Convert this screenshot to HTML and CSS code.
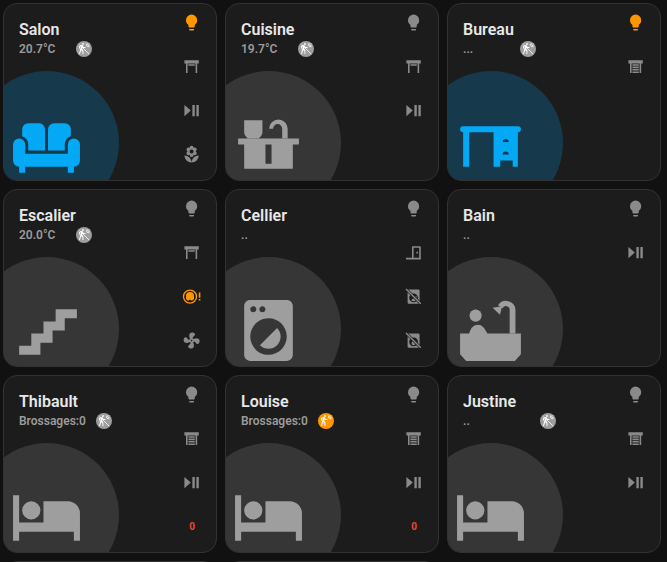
FILE: index.html
```html
<!DOCTYPE html>
<html lang="en">
<head>
    <meta charset="UTF-8">
    <meta name="viewport" content="width=device-width, initial-scale=1.0">
    <title>Maison</title>
    <link rel="stylesheet" href="styles.css">
</head>
<body>
    <!-- icons used by the room cards -->
    <svg class="defs" aria-hidden="true">
        <symbol id="bulb" viewBox="0 0 24 24"><path d="M12,2A7,7 0 0 0 5,9C5,11.38 6.19,13.47 8,14.74V17A1,1 0 0 0 9,18H15A1,1 0 0 0 16,17V14.74C17.81,13.47 19,11.38 19,9A7,7 0 0 0 12,2M9,21A1,1 0 0 0 10,22H14A1,1 0 0 0 15,21V20H9V21Z"/></symbol>
        <symbol id="shutter-open" viewBox="0 0 24 24"><path d="M3 4H21V8H19V20H17V8H7V20H5V8H3V4M8 9H16V11H8V9Z"/></symbol>
        <symbol id="shutter-closed" viewBox="0 0 24 24"><path d="M3 4H21V8H19V20H17V8H7V20H5V8H3V4M8 9H16V11H8V9M8 12H16V14H8V12M8 15H16V17H8V15M8 18H16V20H8V18Z"/></symbol>
        <symbol id="play-pause" viewBox="0 0 24 24"><path d="M3,5V19L11,12M13,19H16V5H13M18,5V19H21V5"/></symbol>
        <symbol id="flower" viewBox="0 0 24 24"><path d="M3,13A9,9 0 0,0 12,22C12,17 7.97,13 3,13M12,5.5A2.5,2.5 0 0,1 14.5,8A2.5,2.5 0 0,1 12,10.5A2.5,2.5 0 0,1 9.5,8A2.5,2.5 0 0,1 12,5.5M5.6,10.25A2.5,2.5 0 0,0 8.1,12.75C8.63,12.75 9.12,12.58 9.5,12.31C9.5,12.37 9.5,12.43 9.5,12.5A2.5,2.5 0 0,0 12,15A2.5,2.5 0 0,0 14.5,12.5C14.5,12.43 14.5,12.37 14.5,12.31C14.88,12.58 15.37,12.75 15.9,12.75C17.28,12.75 18.4,11.63 18.4,10.25C18.4,9.25 17.81,8.4 16.96,8C17.81,7.6 18.4,6.74 18.4,5.75C18.4,4.37 17.28,3.25 15.9,3.25C15.37,3.25 14.88,3.41 14.5,3.69C14.5,3.63 14.5,3.56 14.5,3.5A2.5,2.5 0 0,0 12,1A2.5,2.5 0 0,0 9.5,3.5C9.5,3.56 9.5,3.63 9.5,3.69C9.12,3.41 8.63,3.25 8.1,3.25A2.5,2.5 0 0,0 5.6,5.75C5.6,6.74 6.19,7.6 7.04,8C6.19,8.4 5.6,9.25 5.6,10.25M12,22A9,9 0 0,0 21,13C16,13 12,17 12,22Z"/></symbol>
        <symbol id="fan" viewBox="0 0 24 24"><path d="M12,11A1,1 0 0,0 11,12A1,1 0 0,0 12,13A1,1 0 0,0 13,12A1,1 0 0,0 12,11M12.5,2C17,2 17.11,5.57 14.75,6.75C13.76,7.24 13.32,8.29 13.13,9.22C13.61,9.42 14.03,9.73 14.35,10.13C18.05,8.13 22.03,8.92 22.03,12.5C22.03,17 18.46,17.1 17.28,14.73C16.78,13.74 15.72,13.3 14.79,13.11C14.59,13.59 14.28,14 13.88,14.34C15.87,18.03 15.08,22 11.5,22C7,22 6.91,18.42 9.27,17.24C10.25,16.75 10.69,15.71 10.89,14.79C10.4,14.59 9.97,14.27 9.65,13.87C5.96,15.85 2,15.07 2,11.5C2,7 5.56,6.89 6.74,9.26C7.24,10.25 8.29,10.68 9.22,10.87C9.41,10.39 9.73,9.97 10.14,9.65C8.15,5.96 8.94,2 12.5,2Z"/></symbol>
        <symbol id="door" viewBox="0 0 24 24"><path fill-rule="evenodd" d="M2.5 18.5H10V5A1 1 0 0 1 11 4H20A1 1 0 0 1 21 5V20.5H2.5ZM12 6V18.5H19V6ZM15.5 11H17.5V13H15.5Z"/></symbol>
        <symbol id="vacuum-alert" viewBox="0 0 24 24"><path fill-rule="evenodd" d="M10 3A9 9 0 1 0 10 21A9 9 0 1 0 10 3ZM10 4.7A7.3 7.3 0 1 1 10 19.3A7.3 7.3 0 1 1 10 4.7Z"/><path d="M10 6.300A5 5 0 0 0 5 11.300V15L7 17H8.500L9.500 16H10.500L11.500 17H13L15 15V11.300A5 5 0 0 0 10 6.300Z"/><path d="M21 7H23V13.500H21ZM21 15H23V17H21Z"/></symbol>
        <symbol id="washer-off" viewBox="0 0 24 24"><path fill-rule="evenodd" d="M6 3H18A1.5 1.5 0 0 1 19.5 4.500V19.500A1.500 1.500 0 0 1 18 21H6A1.500 1.500 0 0 1 4.500 19.500V4.500A1.500 1.500 0 0 1 6 3ZM12 8A5.500 5.500 0 1 0 12 19A5.500 5.500 0 1 0 12 8Z"/><path d="M15.500 11L15.800 15A4 4 0 0 1 9 16.500Z"/><path class="cut" d="M2.500 2.500L21 21"/><path class="slash" d="M2.500 2.500L21 21"/></symbol>
        <symbol id="dryer-off" viewBox="0 0 24 24"><path fill-rule="evenodd" d="M6 3H18A1.5 1.5 0 0 1 19.5 4.500V19.500A1.500 1.500 0 0 1 18 21H6A1.500 1.500 0 0 1 4.500 19.500V4.500A1.500 1.500 0 0 1 6 3ZM12 8A5.500 5.500 0 1 0 12 19A5.500 5.500 0 1 0 12 8Z"/><path d="M12 11C13.500 13 14.500 14 14.500 15.300A2.500 2.500 0 0 1 9.500 15.300C9.500 14 10.500 13 12 11Z"/><path class="cut" d="M2.500 2.500L21 21"/><path class="slash" d="M2.500 2.500L21 21"/></symbol>
        <symbol id="motion" viewBox="0 0 24 24"><path d="M10 0.2C9 .2 8.2 1 8.2 2C8.2 3 9 3.8 10 3.8C11 3.8 11.8 3 11.8 2C11.8 1 11 .2 10 .2M15.67 1A7.33 7.33 0 0 0 23 8.33V7A6 6 0 0 1 17 1H15.67M18.33 1C18.33 3.58 20.42 5.67 23 5.67V4.33C21.16 4.33 19.67 2.84 19.67 1H18.33M21 1A2 2 0 0 0 23 3V1H21M7.92 4.03C7.75 4.03 7.58 4.06 7.42 4.11L2 5.8V11H3.8V7.33L5.91 6.67L2 22H3.8L6.67 13.89L9 17V22H10.8V15.59L8.31 11.05L9.04 8.18L10.12 10H15V8.2H11.38L9.38 4.87C9.08 4.37 8.54 4.03 7.92 4.03Z"/></symbol>
        <symbol id="motion-off" viewBox="0 0 24 24"><path d="M10 0.2C9 .2 8.2 1 8.2 2C8.2 3 9 3.8 10 3.8C11 3.800 11.800 3 11.800 2C11.800 1 11 .2 10 .2M15.670 1A7.330 7.330 0 0 0 23 8.330V7A6 6 0 0 1 17 1H15.670M18.330 1C18.330 3.580 20.420 5.670 23 5.670V4.330C21.160 4.330 19.670 2.840 19.670 1H18.330M21 1A2 2 0 0 0 23 3V1H21M7.920 4.030C7.750 4.030 7.580 4.060 7.420 4.110L2 5.800V11H3.800V7.330L5.910 6.670L2 22H3.800L6.670 13.890L9 17V22H10.800V15.590L8.310 11.050L9.040 8.180L10.120 10H15V8.200H11.380L9.380 4.870C9.080 4.370 8.540 4.030 7.920 4.030Z"/><path class="slash-light" d="M3 3L22 22"/></symbol>
        <symbol id="bed" viewBox="0 0 24 24"><path d="M19 7H11V14H3V5H1V20H3V17H21V20H23V11A4 4 0 0 0 19 7M7 13A3 3 0 0 0 10 10A3 3 0 0 0 7 7A3 3 0 0 0 4 10A3 3 0 0 0 7 13Z"/></symbol>
        <symbol id="sofa" viewBox="0 0 24 24"><path d="M3 10A2 2 0 0 1 5 12V15H19V12A2 2 0 0 1 23 12V17.300A2 2 0 0 1 21 19.300V21.300H19V19.300H5V21.300H3V19.300A2 2 0 0 1 1 17.300V12A2 2 0 0 1 3 10Z"/><path d="M4 7A2 2 0 0 1 6 5H9.700A2 2 0 0 1 11.500 7V14H6V12A3 3 0 0 0 4 9.300Z"/><path d="M12.500 7A2 2 0 0 1 14.500 5H18A2 2 0 0 1 20 7V9.300A3 3 0 0 0 18 12V14H12.500Z"/></symbol>
        <symbol id="countertop" viewBox="0 0 24 24"><path fill-rule="evenodd" d="M2 10H22V12H20V20H4V12H2ZM11 12V18.300H13V12Z"/><path d="M4 4H10V8A2 2 0 0 1 9 9.700V10H5V9.700A2 2 0 0 1 4 8Z"/><path d="M16.500 10V6.800A1.500 1.500 0 0 0 13.500 6.800H12.200A3.050 3.050 0 0 1 18.300 6.800V10Z"/></symbol>
        <symbol id="desk" viewBox="0 0 24 24"><path fill-rule="evenodd" d="M3 6H21A1 1 0 0 1 21 8V19.300H19.300V17.300H15.200V19.300H13V8H5V19.300H3V8A1 1 0 0 1 3 6ZM16 11.200A1 1 0 0 1 18 11.200ZM16 15.300A1 1 0 0 1 18 15.300Z"/></symbol>
        <symbol id="stairs" viewBox="0 0 24 24"><path d="M15,5V9H11V13H7V17H3V20H10V16H14V12H18V8H22V5H15Z"/></symbol>
        <symbol id="washer" viewBox="0 0 24 24"><path d="M14.83,11.17C16.39,12.73 16.39,15.27 14.83,16.83C13.27,18.39 10.73,18.39 9.17,16.83L14.83,11.17M6,2H18C19.11,2 20,2.89 20,4V20C20,21.11 19.11,22 18,22H6C4.89,22 4,21.11 4,20V4C4,2.89 4.89,2 6,2M7,4C6.45,4 6,4.45 6,5C6,5.55 6.45,6 7,6C7.55,6 8,5.55 8,5C8,4.45 7.55,4 7,4M10,4C9.45,4 9,4.45 9,5C9,5.55 9.45,6 10,6C10.56,6 11,5.55 11,5C11,4.45 10.56,4 10,4M12,8C8.69,8 6,10.69 6,14C6,17.31 8.69,20 12,20C15.31,20 18,17.31 18,14C18,10.69 15.31,8 12,8Z"/></symbol>
        <symbol id="bath" viewBox="0 0 24 24"><path d="M2 13H5C5.500 11 6.500 10.100 8 10.100C9.200 10.100 9.900 11 11 13H22V19.800L20 22H4L2 19.800Z"/><path d="M18.300 13V5.200A1.200 1.200 0 0 0 16 4.700L14.500 3.700A3.100 3.100 0 0 1 20.200 5.200V13Z"/><path d="M12.700 4.500L15.800 4L15.100 6.800Z"/><circle cx="7.100" cy="7.100" r="2"/></symbol>
    </svg>

    <div class="cards">
        <div class="card on">
            <div class="info">
                <div class="name">Salon</div>
                <div class="sub"><span class="value">20.7°C</span><span class="badge"><svg><use href="#motion-off"/></svg></span></div>
            </div>
            <div class="actions">
                <span class="action orange"><svg><use href="#bulb"/></svg></span>
                <span class="action"><svg><use href="#shutter-open"/></svg></span>
                <span class="action"><svg><use href="#play-pause"/></svg></span>
                <span class="action"><svg><use href="#flower"/></svg></span>
            </div>
            <div class="circle"></div>
            <svg class="room-icon"><use href="#sofa"/></svg>
        </div>

        <div class="card">
            <div class="info">
                <div class="name">Cuisine</div>
                <div class="sub"><span class="value">19.7°C</span><span class="badge"><svg><use href="#motion-off"/></svg></span></div>
            </div>
            <div class="actions">
                <span class="action"><svg><use href="#bulb"/></svg></span>
                <span class="action"><svg><use href="#shutter-open"/></svg></span>
                <span class="action"><svg><use href="#play-pause"/></svg></span>
            </div>
            <div class="circle"></div>
            <svg class="room-icon"><use href="#countertop"/></svg>
        </div>

        <div class="card on">
            <div class="info">
                <div class="name">Bureau</div>
                <div class="sub"><span class="value">...</span><span class="badge"><svg><use href="#motion-off"/></svg></span></div>
            </div>
            <div class="actions">
                <span class="action orange"><svg><use href="#bulb"/></svg></span>
                <span class="action"><svg><use href="#shutter-closed"/></svg></span>
            </div>
            <div class="circle"></div>
            <svg class="room-icon"><use href="#desk"/></svg>
        </div>

        <div class="card">
            <div class="info">
                <div class="name">Escalier</div>
                <div class="sub"><span class="value">20.0°C</span><span class="badge"><svg><use href="#motion-off"/></svg></span></div>
            </div>
            <div class="actions">
                <span class="action"><svg><use href="#bulb"/></svg></span>
                <span class="action"><svg><use href="#shutter-open"/></svg></span>
                <span class="action orange"><svg><use href="#vacuum-alert"/></svg></span>
                <span class="action"><svg><use href="#fan"/></svg></span>
            </div>
            <div class="circle"></div>
            <svg class="room-icon"><use href="#stairs"/></svg>
        </div>

        <div class="card">
            <div class="info">
                <div class="name">Cellier</div>
                <div class="sub"><span class="value">..</span></div>
            </div>
            <div class="actions">
                <span class="action"><svg><use href="#bulb"/></svg></span>
                <span class="action"><svg><use href="#door"/></svg></span>
                <span class="action"><svg><use href="#washer-off"/></svg></span>
                <span class="action"><svg><use href="#dryer-off"/></svg></span>
            </div>
            <div class="circle"></div>
            <svg class="room-icon"><use href="#washer"/></svg>
        </div>

        <div class="card">
            <div class="info">
                <div class="name">Bain</div>
                <div class="sub"><span class="value">..</span></div>
            </div>
            <div class="actions">
                <span class="action"><svg><use href="#bulb"/></svg></span>
                <span class="action"><svg><use href="#play-pause"/></svg></span>
            </div>
            <div class="circle"></div>
            <svg class="room-icon"><use href="#bath"/></svg>
        </div>

        <div class="card">
            <div class="info">
                <div class="name">Thibault</div>
                <div class="sub"><span class="value wide">Brossages:0</span><span class="badge"><svg><use href="#motion-off"/></svg></span></div>
            </div>
            <div class="actions">
                <span class="action"><svg><use href="#bulb"/></svg></span>
                <span class="action"><svg><use href="#shutter-closed"/></svg></span>
                <span class="action"><svg><use href="#play-pause"/></svg></span>
                <span class="action count">0</span>
            </div>
            <div class="circle"></div>
            <svg class="room-icon"><use href="#bed"/></svg>
        </div>

        <div class="card">
            <div class="info">
                <div class="name">Louise</div>
                <div class="sub"><span class="value wide">Brossages:0</span><span class="badge active"><svg><use href="#motion"/></svg></span></div>
            </div>
            <div class="actions">
                <span class="action"><svg><use href="#bulb"/></svg></span>
                <span class="action"><svg><use href="#shutter-closed"/></svg></span>
                <span class="action"><svg><use href="#play-pause"/></svg></span>
                <span class="action count">0</span>
            </div>
            <div class="circle"></div>
            <svg class="room-icon"><use href="#bed"/></svg>
        </div>

        <div class="card">
            <div class="info">
                <div class="name">Justine</div>
                <div class="sub"><span class="value wide">..</span><span class="badge"><svg><use href="#motion-off"/></svg></span></div>
            </div>
            <div class="actions">
                <span class="action"><svg><use href="#bulb"/></svg></span>
                <span class="action"><svg><use href="#shutter-closed"/></svg></span>
                <span class="action"><svg><use href="#play-pause"/></svg></span>
            </div>
            <div class="circle"></div>
            <svg class="room-icon"><use href="#bed"/></svg>
        </div>

        <!-- next row, only its top edge is on screen -->
        <div class="card"></div>
        <div class="card"></div>
    </div>
</body>
</html>
```

FILE: styles.css
```css
html, body {
    height: 100%;
    margin: 0;
    overflow: hidden;
    background-color: #111111;
    font-family: Roboto, "Liberation Sans", sans-serif;
}

.defs {
    display: none;
}

.cards {
    display: grid;
    grid-template-columns: repeat(3, 214px);
    grid-auto-rows: 178px;
    gap: 8px;
    box-sizing: border-box;
    height: 100%;
    padding: 3px 3px 0;
    overflow: hidden;
}

/* room card */
.card {
    position: relative;
    display: flex;
    overflow: hidden;
    box-sizing: border-box;
    background: #1c1c1c;
    border: 1px solid #323232;
    border-radius: 14px;
}

.info {
    flex: 1;
    padding: 16px 0 0 15px;
}

.name {
    font-size: 16px;
    font-weight: 600;
    line-height: 20px;
    color: #e8e8e8;
}

.sub {
    display: flex;
    align-items: center;
    height: 16px;
    margin-top: 1px;
    font-size: 12px;
    font-weight: 600;
    color: #9b9b9b;
}

.value {
    width: 57px;
    flex: none;
}

.value.wide {
    width: 77px;
}

.badge {
    display: flex;
    align-items: center;
    justify-content: center;
    width: 16px;
    height: 16px;
    border-radius: 50%;
    background: #9e9e9e;
    fill: #ffffff;
}

.badge.active {
    background: #ff9800;
}

.badge svg {
    width: 12px;
    height: 12px;
}

/* buttons on the right */
.actions {
    position: relative;
    z-index: 1;
    display: flex;
    flex-direction: column;
    gap: 8px;
    width: 36px;
    padding-right: 6px;
}

.action {
    display: flex;
    align-items: center;
    justify-content: center;
    box-sizing: border-box;
    height: 36px;
    padding-top: 1px;
    fill: #8a8a8a;
}

.action svg {
    width: 19.2px;
    height: 19.2px;
}

.action.orange {
    fill: #ff9800;
}

.action.count {
    font-size: 10px;
    font-weight: 700;
    color: #f44336;
}

.cut {
    fill: none;
    stroke: #1c1c1c;
    stroke-width: 3.4;
}

.slash {
    fill: none;
    stroke: #8a8a8a;
    stroke-width: 1.7;
}

.slash-light {
    fill: none;
    stroke: #ffffff;
    stroke-width: 1.6;
}

/* big round shape with the room icon */
.circle {
    position: absolute;
    left: -29px;
    top: 67px;
    width: 144px;
    height: 144px;
    border-radius: 50%;
    background: #363636;
}

.room-icon {
    position: absolute;
    left: 6px;
    top: 104px;
    width: 73px;
    height: 73px;
    fill: #9e9e9e;
}

.card.on .circle {
    background: #163a4b;
}

.card.on .room-icon {
    fill: #03a9f4;
}
```
